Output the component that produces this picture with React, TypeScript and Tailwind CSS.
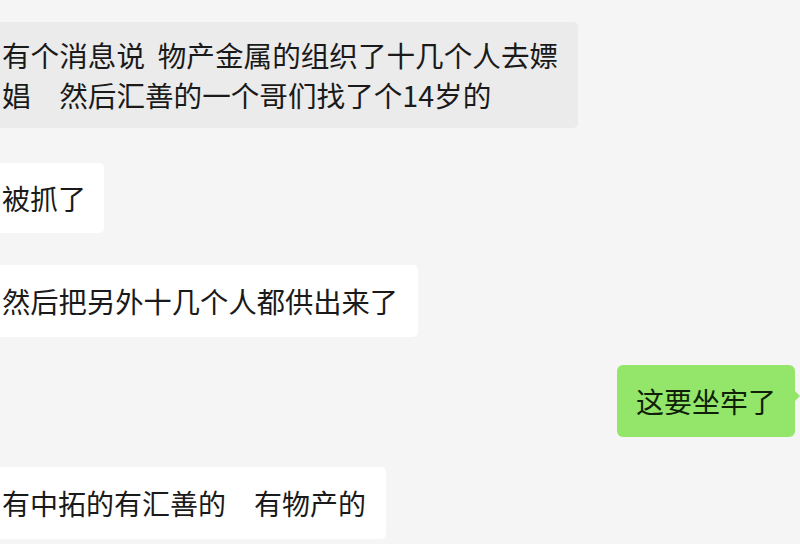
export default function App() {
  const font = { fontFamily: '"Noto Sans CJK SC", "Noto Sans", sans-serif' };

  return (
    <div
      className="w-[800px] h-[544px] overflow-hidden bg-[#f5f5f5] text-[#1a1a1a] flex flex-col"
      style={font}
    >
      {/* incoming, grey */}
      <div className="mt-[22px] self-start -ml-4 pl-[18px] pr-5 py-[13px] bg-[#ebebeb] rounded-[5px] text-[28.6px] leading-10 whitespace-pre">
        <div>有个消息说  物产金属的组织了十几个人去嫖</div>
        <div>娼　然后汇善的一个哥们找了个14岁的</div>
      </div>

      <div className="mt-[35px] self-start -ml-4 pl-[18px] pr-[18px] py-[15px] bg-white rounded-[5px] text-[28px] leading-10">
        被抓了
      </div>

      <div className="mt-[32px] self-start -ml-4 pl-[18px] pr-5 py-4 bg-white rounded-[5px] text-[28.3px] leading-10">
        然后把另外十几个人都供出来了
      </div>

      {/* outgoing, green */}
      <div className="mt-[28px] self-end mr-[5px] relative">
        <div className="px-[19px] py-4 bg-[#93e66a] rounded-[6px] text-[28px] leading-10 text-[#0f1f08]">
          这要坐牢了
        </div>
        <span className="absolute right-[-5px] top-[25px] w-0 h-0 border-y-[6px] border-y-transparent border-l-[6px] border-l-[#93e66a]" />
      </div>

      <div className="mt-[30px] self-start -ml-4 pl-[18px] pr-5 py-4 bg-white rounded-[5px] text-[28px] leading-10 whitespace-pre">
        有中拓的有汇善的　有物产的
      </div>
    </div>
  );
}
